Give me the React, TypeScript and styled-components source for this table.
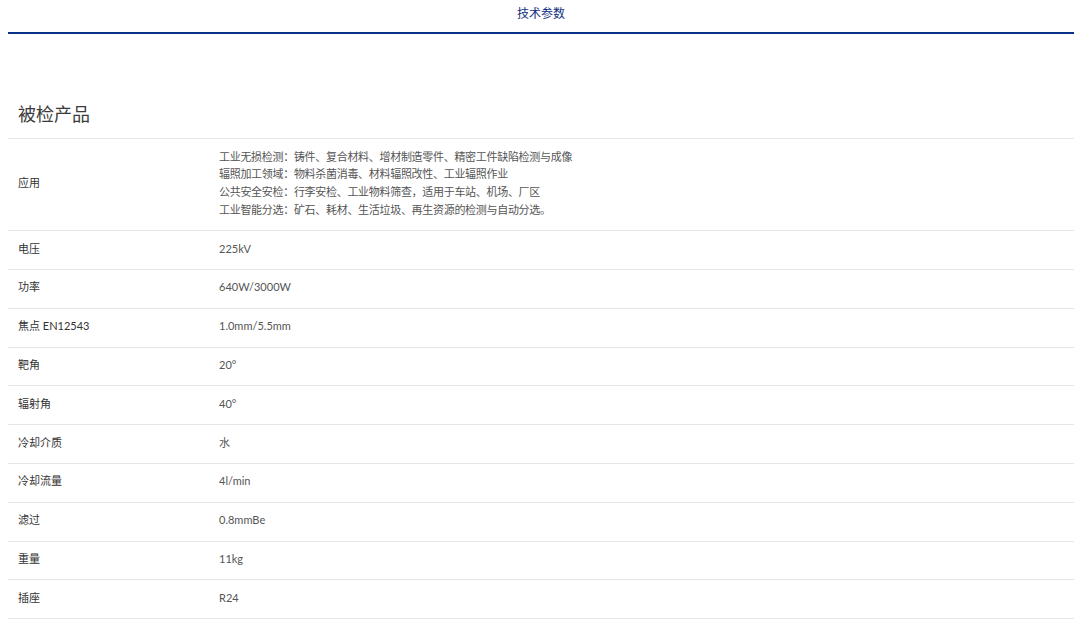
import React from "react";
import styled, { createGlobalStyle } from "styled-components";

const Global = createGlobalStyle`
  html, body { margin: 0; padding: 0; background: #fff; }
  body { font-family: "Noto Sans CJK SC", "Noto Sans", sans-serif; }
`;

const Page = styled.div`
  padding: 0 8px;
`;

const TabBar = styled.div`
  display: flex;
  justify-content: center;
  height: 32px;
  border-bottom: 2px solid #0b3289;
`;

const Tab = styled.div`
  font-size: 12px;
  line-height: 26px;
  color: #0f2f7f;
`;

const Heading = styled.h2`
  margin: 64px 0 10px;
  padding-left: 10px;
  font-size: 18px;
  line-height: 30px;
  font-weight: 400;
  color: #3a3a3a;
`;

const Table = styled.div`
  border-top: 1px solid #e6e6e6;
`;

const Row = styled.div`
  display: grid;
  grid-template-columns: 211px 1fr;
  align-items: center;
  border-bottom: 1px solid #e6e6e6;
  padding: 8.5px 0 11.5px;
`;

const Label = styled.div`
  padding-left: 10px;
  font-size: 11px;
  line-height: 17.8px;
  color: #333;
  font-family: "Lato", "Noto Sans CJK SC", sans-serif;
`;

const Value = styled.div`
  font-size: 11px;
  line-height: 17.8px;
  color: #555;
  font-family: "Lato", "Noto Sans CJK SC", sans-serif;
`;

const Line = styled.div`
  letter-spacing: -0.3px;
`;

const rows: [string, string | string[]][] = [
  [
    "应用",
    [
      "工业无损检测：铸件、复合材料、增材制造零件、精密工件缺陷检测与成像",
      "辐照加工领域：物料杀菌消毒、材料辐照改性、工业辐照作业",
      "公共安全安检：行李安检、工业物料筛查，适用于车站、机场、厂区",
      "工业智能分选：矿石、耗材、生活垃圾、再生资源的检测与自动分选。",
    ],
  ],
  ["电压", "225kV"],
  ["功率", "640W/3000W"],
  ["焦点 EN12543", "1.0mm/5.5mm"],
  ["靶角", "20°"],
  ["辐射角", "40°"],
  ["冷却介质", "水"],
  ["冷却流量", "4l/min"],
  ["滤过", "0.8mmBe"],
  ["重量", "11kg"],
  ["插座", "R24"],
];

export default function App() {
  return (
    <Page>
      <Global />
      <TabBar>
        <Tab>技术参数</Tab>
      </TabBar>
      <Heading>被检产品</Heading>
      <Table>
        {rows.map(([k, v]) => (
          <Row key={k}>
            <Label>{k}</Label>
            <Value>
              {Array.isArray(v) ? v.map((l) => <Line key={l}>{l}</Line>) : v}
            </Value>
          </Row>
        ))}
      </Table>
    </Page>
  );
}
